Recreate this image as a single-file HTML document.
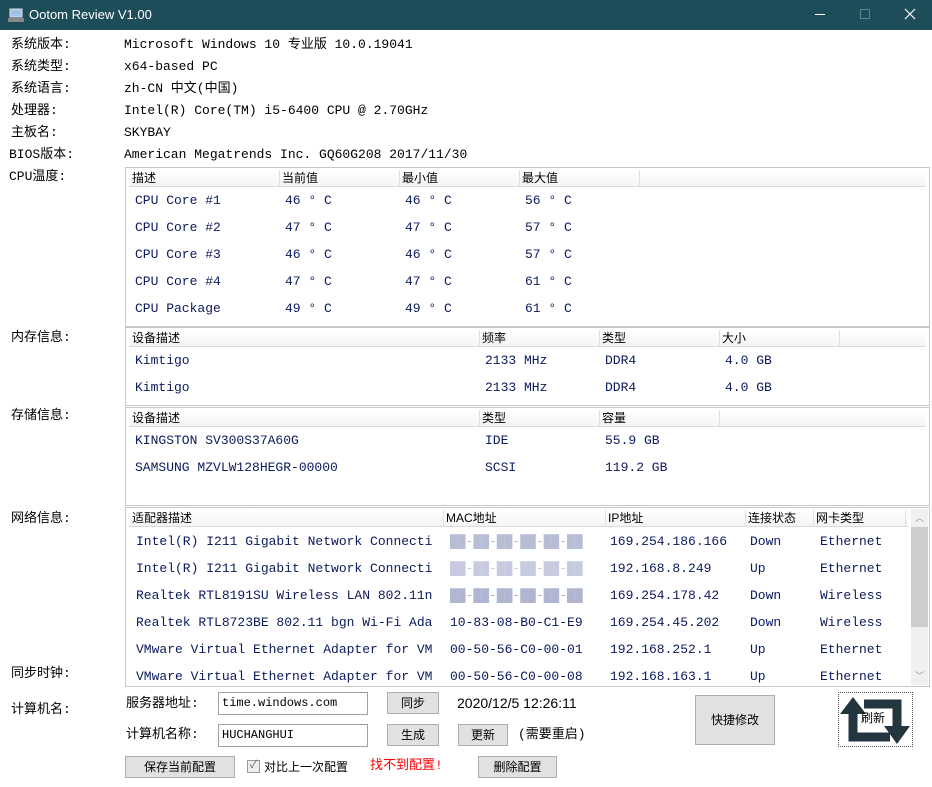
<!DOCTYPE html>
<html><head><meta charset="utf-8"><style>
*{margin:0;padding:0;box-sizing:border-box}
body{width:932px;height:787px;background:#fff;position:relative;overflow:hidden;font-family:"Liberation Mono","Noto Sans CJK SC",monospace;font-size:13px;color:#000}
.a{position:absolute;white-space:nowrap;line-height:16px}
.tb{position:absolute;left:0;top:0;width:932px;height:30px;background:#1e4d5a;color:#fff;font-family:"Liberation Sans",sans-serif;font-size:13px}
.box{position:absolute;border:1px solid #c8c8cc;background:#fff}
.hd{position:absolute;left:3px;right:3px;top:2px;height:17px;background:linear-gradient(#fff,#f3f4f6);border-bottom:1px solid #dadada}
.sep{position:absolute;top:0;width:1px;height:17px;background:#e0e0e0}
.h{position:absolute;top:1px;font-size:12px;line-height:15px;color:#000;font-family:"Liberation Sans","Noto Sans CJK SC",sans-serif}
.v{color:#0b1a5c}
.btn{position:absolute;background:#e1e1e1;border:1px solid #adadad;font-size:12px;text-align:center;font-family:"Noto Sans CJK SC",sans-serif}
.inp{position:absolute;border:1px solid #a0a0a0;background:#fff;font-size:12px;padding-left:3px;line-height:20px}
</style></head><body>
<div class="tb">
<svg style="position:absolute;left:8px;top:7px" width="16" height="16"><rect x="2" y="2" width="12" height="8" fill="#9ec3e6" stroke="#ddd"/><rect x="0" y="11" width="16" height="4" fill="#888"/></svg>
<span style="position:absolute;left:29px;top:7px">Ootom Review V1.00</span>
<span style="position:absolute;left:815px;top:14px;width:10px;height:1px;background:#fff"></span>
<span style="position:absolute;left:860px;top:9px;width:10px;height:10px;border:1px solid #5d8590"></span>
<svg style="position:absolute;left:904px;top:8px" width="12" height="12"><path d="M1 1L11 11M11 1L1 11" stroke="#fff" stroke-width="1.2"/></svg>
</div>

<div class="a" style="left:11px;top:37px">系统版本:</div><div class="a" style="left:124px;top:37px">Microsoft Windows 10 专业版 10.0.19041</div>
<div class="a" style="left:11px;top:59px">系统类型:</div><div class="a" style="left:124px;top:59px">x64-based PC</div>
<div class="a" style="left:11px;top:81px">系统语言:</div><div class="a" style="left:124px;top:81px">zh-CN 中文(中国)</div>
<div class="a" style="left:11px;top:103px">处理器:</div><div class="a" style="left:124px;top:103px">Intel(R) Core(TM) i5-6400 CPU @ 2.70GHz</div>
<div class="a" style="left:11px;top:125px">主板名:</div><div class="a" style="left:124px;top:125px">SKYBAY</div>
<div class="a" style="left:9px;top:147px">BIOS版本:</div><div class="a" style="left:124px;top:147px">American Megatrends Inc. GQ60G208 2017/11/30</div>
<div class="a" style="left:9px;top:169px">CPU温度:</div>
<div class="a" style="left:11px;top:330px">内存信息:</div>
<div class="a" style="left:11px;top:408px">存储信息:</div>
<div class="a" style="left:11px;top:511px">网络信息:</div>
<div class="a" style="left:11px;top:666px">同步时钟:</div>
<div class="a" style="left:11px;top:702px">计算机名:</div>

<div class="box" style="left:125px;top:167px;width:805px;height:160px">
<div class="hd"><div class="sep" style="left:150px"></div><div class="sep" style="left:270px"></div><div class="sep" style="left:390px"></div><div class="sep" style="left:510px"></div>
<span class="h" style="left:3px">描述</span><span class="h" style="left:153px">当前值</span><span class="h" style="left:273px">最小值</span><span class="h" style="left:393px">最大值</span></div>
</div>
<div class="v">
<div class="a" style="left:135px;top:193px">CPU Core #1</div><div class="a" style="left:285px;top:193px">46 ° C</div><div class="a" style="left:405px;top:193px">46 ° C</div><div class="a" style="left:525px;top:193px">56 ° C</div>
<div class="a" style="left:135px;top:220px">CPU Core #2</div><div class="a" style="left:285px;top:220px">47 ° C</div><div class="a" style="left:405px;top:220px">47 ° C</div><div class="a" style="left:525px;top:220px">57 ° C</div>
<div class="a" style="left:135px;top:247px">CPU Core #3</div><div class="a" style="left:285px;top:247px">46 ° C</div><div class="a" style="left:405px;top:247px">46 ° C</div><div class="a" style="left:525px;top:247px">57 ° C</div>
<div class="a" style="left:135px;top:274px">CPU Core #4</div><div class="a" style="left:285px;top:274px">47 ° C</div><div class="a" style="left:405px;top:274px">47 ° C</div><div class="a" style="left:525px;top:274px">61 ° C</div>
<div class="a" style="left:135px;top:301px">CPU Package</div><div class="a" style="left:285px;top:301px">49 ° C</div><div class="a" style="left:405px;top:301px">49 ° C</div><div class="a" style="left:525px;top:301px">61 ° C</div>
</div>

<div class="box" style="left:125px;top:327px;width:805px;height:79px">
<div class="hd"><div class="sep" style="left:350px"></div><div class="sep" style="left:470px"></div><div class="sep" style="left:590px"></div><div class="sep" style="left:710px"></div>
<span class="h" style="left:3px">设备描述</span><span class="h" style="left:353px">频率</span><span class="h" style="left:473px">类型</span><span class="h" style="left:593px">大小</span></div>
</div>
<div class="v">
<div class="a" style="left:135px;top:353px">Kimtigo</div><div class="a" style="left:485px;top:353px">2133 MHz</div><div class="a" style="left:605px;top:353px">DDR4</div><div class="a" style="left:725px;top:353px">4.0 GB</div>
<div class="a" style="left:135px;top:380px">Kimtigo</div><div class="a" style="left:485px;top:380px">2133 MHz</div><div class="a" style="left:605px;top:380px">DDR4</div><div class="a" style="left:725px;top:380px">4.0 GB</div>
</div>

<div class="box" style="left:125px;top:407px;width:805px;height:99px">
<div class="hd"><div class="sep" style="left:350px"></div><div class="sep" style="left:470px"></div><div class="sep" style="left:590px"></div>
<span class="h" style="left:3px">设备描述</span><span class="h" style="left:353px">类型</span><span class="h" style="left:473px">容量</span></div>
</div>
<div class="v">
<div class="a" style="left:135px;top:433px">KINGSTON SV300S37A60G</div><div class="a" style="left:485px;top:433px">IDE</div><div class="a" style="left:605px;top:433px">55.9 GB</div>
<div class="a" style="left:135px;top:460px">SAMSUNG MZVLW128HEGR-00000</div><div class="a" style="left:485px;top:460px">SCSI</div><div class="a" style="left:605px;top:460px">119.2 GB</div>
</div>

<div class="box" style="left:125px;top:507px;width:805px;height:180px;overflow:hidden">
<div class="hd" style="right:21px"><div class="sep" style="left:314px"></div><div class="sep" style="left:476px"></div><div class="sep" style="left:616px"></div><div class="sep" style="left:684px"></div><div class="sep" style="left:776px"></div>
<span class="h" style="left:3px">适配器描述</span><span class="h" style="left:317px">MAC地址</span><span class="h" style="left:479px">IP地址</span><span class="h" style="left:619px">连接状态</span><span class="h" style="left:687px">网卡类型</span></div>
<div style="position:absolute;right:1px;top:1px;width:17px;height:176px;background:#f0f0f0">
<div style="position:absolute;left:0;top:18px;width:17px;height:100px;background:#cdcdcd"></div>
<span style="position:absolute;left:4px;top:2px;font-size:9px;color:#999">︿</span>
<span style="position:absolute;left:4px;top:160px;font-size:9px;color:#999">﹀</span></div>
</div>
<div class="v">
<div class="a" style="left:136px;top:534px">Intel(R) I211 Gigabit Network Connecti</div><div class="a" style="left:450px;top:534px;color:#b8bdd6">██-██-██-██-██-██</div><div class="a" style="left:610px;top:534px">169.254.186.166</div><div class="a" style="left:750px;top:534px">Down</div><div class="a" style="left:820px;top:534px">Ethernet</div>
<div class="a" style="left:136px;top:561px">Intel(R) I211 Gigabit Network Connecti</div><div class="a" style="left:450px;top:561px;color:#c8cbe0">██-██-██-██-██-██</div><div class="a" style="left:610px;top:561px">192.168.8.249</div><div class="a" style="left:750px;top:561px">Up</div><div class="a" style="left:820px;top:561px">Ethernet</div>
<div class="a" style="left:136px;top:588px">Realtek RTL8191SU Wireless LAN 802.11n</div><div class="a" style="left:450px;top:588px;color:#b0b6d2">██-██-██-██-██-██</div><div class="a" style="left:610px;top:588px">169.254.178.42</div><div class="a" style="left:750px;top:588px">Down</div><div class="a" style="left:820px;top:588px">Wireless</div>
<div class="a" style="left:136px;top:615px">Realtek RTL8723BE 802.11 bgn Wi-Fi Ada</div><div class="a" style="left:450px;top:615px">10-83-08-B0-C1-E9</div><div class="a" style="left:610px;top:615px">169.254.45.202</div><div class="a" style="left:750px;top:615px">Down</div><div class="a" style="left:820px;top:615px">Wireless</div>
<div class="a" style="left:136px;top:642px">VMware Virtual Ethernet Adapter for VM</div><div class="a" style="left:450px;top:642px">00-50-56-C0-00-01</div><div class="a" style="left:610px;top:642px">192.168.252.1</div><div class="a" style="left:750px;top:642px">Up</div><div class="a" style="left:820px;top:642px">Ethernet</div>
<div class="a" style="left:136px;top:669px">VMware Virtual Ethernet Adapter for VM</div><div class="a" style="left:450px;top:669px">00-50-56-C0-00-08</div><div class="a" style="left:610px;top:669px">192.168.163.1</div><div class="a" style="left:750px;top:669px">Up</div><div class="a" style="left:820px;top:669px">Ethernet</div>
</div>

<div class="a" style="left:126px;top:696px">服务器地址:</div>
<div class="inp" style="left:218px;top:692px;width:150px;height:23px">time.windows.com</div>
<div class="btn" style="left:387px;top:692px;width:52px;height:22px;line-height:20px">同步</div>
<div class="a" style="left:457px;top:695px;font-family:'Liberation Sans',sans-serif;font-size:14px">2020/12/5 12:26:11</div>
<div class="a" style="left:126px;top:727px">计算机名称:</div>
<div class="inp" style="left:218px;top:724px;width:150px;height:23px">HUCHANGHUI</div>
<div class="btn" style="left:387px;top:724px;width:52px;height:22px;line-height:20px">生成</div>
<div class="btn" style="left:458px;top:724px;width:50px;height:22px;line-height:20px">更新</div>
<div class="a" style="left:518px;top:727px">(需要重启)</div>
<div class="btn" style="left:695px;top:695px;width:80px;height:50px;line-height:48px">快捷修改</div>
<div style="position:absolute;left:838px;top:692px;width:75px;height:55px;border:1px dotted #555"></div>
<svg style="position:absolute;left:838px;top:692px" width="76" height="56" viewBox="0 0 76 56">
<path d="M15 22V45H52" stroke="#233640" stroke-width="9" fill="none"/>
<path d="M26 12H59V34" stroke="#233640" stroke-width="9" fill="none"/>
<path d="M15 5L2 22H28Z" fill="#233640"/>
<path d="M59 52L46 34H72Z" fill="#233640"/>
</svg>
<div class="a" style="left:861px;top:711px;font-size:12px">刷新</div>
<div class="btn" style="left:125px;top:756px;width:110px;height:22px;line-height:20px">保存当前配置</div>
<div style="position:absolute;left:247px;top:760px;width:13px;height:13px;border:1px solid #999;background:#eee;font-size:11px;line-height:11px;text-align:center;color:#666">✓</div>
<div class="a" style="left:264px;top:759px;font-size:12px;font-family:'Noto Sans CJK SC',sans-serif">对比上一次配置</div>
<div class="a" style="left:370px;top:758px;color:#f00">找不到配置!</div>
<div class="btn" style="left:478px;top:756px;width:79px;height:22px;line-height:20px">删除配置</div>
</body></html>
